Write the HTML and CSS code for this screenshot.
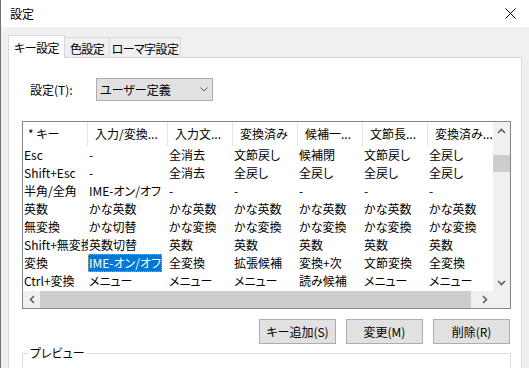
FILE: index.html
```html
<!DOCTYPE html>
<html lang="ja">
<head>
    <meta charset="UTF-8" />
    <title>設定</title>
    <link rel="stylesheet" href="styles.css">
</head>
<body>
<div class="window">
    <div class="titlebar">
        <span class="title">設定</span>
        <svg class="close" width="11" height="11" viewBox="0 0 11 11">
            <path d="M0.5 0.5L10.5 10.5M10.5 0.5L0.5 10.5" stroke="#000" stroke-width="1" fill="none" />
        </svg>
    </div>
    <div class="dialog">
        <div class="tabs">
            <div class="tab tab-key active">キー設定</div>
            <div class="tab tab-color">色設定</div>
            <div class="tab tab-roma">ローマ字設定</div>
        </div>
        <div class="panel">
            <div class="setting-row">
                <label class="setting-label">設定(T):</label>
                <div class="combo">
                    <span>ユーザー定義</span>
                    <svg width="8" height="5" viewBox="0 0 8 5">
                        <path d="M0.5 0.5L4 4L7.5 0.5" fill="none" stroke="#555" stroke-width="1" />
                    </svg>
                </div>
            </div>

            <div class="list">
                <div class="list-view">
                    <table>
                        <colgroup>
                            <col class="c-key">
                            <col class="c-wide">
                            <col class="c-norm">
                            <col class="c-norm">
                            <col class="c-norm">
                            <col class="c-norm">
                            <col class="c-last">
                        </colgroup>
                        <thead>
                        <tr>
                            <th class="first">* キー</th>
                            <th>入力/変換...</th>
                            <th>入力文...</th>
                            <th>変換済み</th>
                            <th>候補一...</th>
                            <th>文節長...</th>
                            <th>変換済み...</th>
                        </tr>
                        </thead>
                        <tbody>
                        <tr><td>Esc</td><td>-</td><td>全消去</td><td>文節戻し</td><td>候補閉</td><td>文節戻し</td><td>全戻し</td></tr>
                        <tr><td>Shift+Esc</td><td>-</td><td>全消去</td><td>全戻し</td><td>全戻し</td><td>全戻し</td><td>全戻し</td></tr>
                        <tr><td>半角/全角</td><td>IME-オン/オフ</td><td>-</td><td>-</td><td>-</td><td>-</td><td>-</td></tr>
                        <tr><td>英数</td><td>かな英数</td><td>かな英数</td><td>かな英数</td><td>かな英数</td><td>かな英数</td><td>かな英数</td></tr>
                        <tr><td>無変換</td><td>かな切替</td><td>かな変換</td><td>かな変換</td><td>かな変換</td><td>かな変換</td><td>かな変換</td></tr>
                        <tr><td>Shift+無変換</td><td>英数切替</td><td>英数</td><td>英数</td><td>英数</td><td>英数</td><td>英数</td></tr>
                        <tr><td>変換</td><td><span class="selected">IME-オン/オフ</span></td><td>全変換</td><td>拡張候補</td><td>変換+次</td><td>文節変換</td><td>全変換</td></tr>
                        <tr><td>Ctrl+変換</td><td>メニュー</td><td>メニュー</td><td>メニュー</td><td>読み候補</td><td>メニュー</td><td>メニュー</td></tr>
                        </tbody>
                    </table>
                </div>
                <div class="vscroll">
                    <div class="arrow">
                        <svg width="9" height="6" viewBox="0 0 9 6"><path d="M1 5L4.5 1.5L8 5" fill="none" stroke="#606060" stroke-width="1.6" /></svg>
                    </div>
                    <div class="vthumb"></div>
                    <div class="spacer"></div>
                    <div class="arrow">
                        <svg width="9" height="6" viewBox="0 0 9 6"><path d="M1 1L4.5 4.5L8 1" fill="none" stroke="#606060" stroke-width="1.6" /></svg>
                    </div>
                </div>
                <div class="hscroll">
                    <div class="arrow">
                        <svg width="6" height="9" viewBox="0 0 6 9"><path d="M5 1L1.5 4.5L5 8" fill="none" stroke="#606060" stroke-width="1.6" /></svg>
                    </div>
                    <div class="hthumb"></div>
                    <div class="spacer"></div>
                    <div class="arrow">
                        <svg width="6" height="9" viewBox="0 0 6 9"><path d="M1 1L4.5 4.5L1 8" fill="none" stroke="#606060" stroke-width="1.6" /></svg>
                    </div>
                </div>
                <div class="corner"></div>
            </div>

            <div class="buttons">
                <button type="button">キー追加(S)</button>
                <button type="button">変更(M)</button>
                <button type="button">削除(R)</button>
            </div>

            <fieldset class="preview">
                <legend>プレビュー</legend>
            </fieldset>
        </div>
    </div>
</div>
</body>
</html>
```

FILE: styles.css
```css
body {
    margin: 0;
    font-family: "Noto Sans CJK JP", sans-serif;
    font-size: 12px;
    font-feature-settings: "palt";
    color: #000;
}
.window {
    width: 529px;
    height: 368px;
    overflow: hidden;
    background: #f0f0f0;
    border-left: 1px solid #707070;
    box-sizing: border-box;
}
.titlebar {
    height: 27px;
    background: #fff;
    display: flex;
    align-items: center;
    justify-content: space-between;
    padding: 0 13px 0 9px;
    box-sizing: border-box;
}
.dialog {
    padding: 8px 7px 0 7px;
}
.tabs {
    display: flex;
    align-items: flex-end;
    height: 22px;
}
.tab {
    height: 20px;
    box-sizing: border-box;
    border: 1px solid #d9d9d9;
    border-bottom: none;
    background: #f0f0f0;
    display: flex;
    align-items: center;
    justify-content: center;
    white-space: nowrap;
    letter-spacing: -0.6px;
    padding-top: 2px;
    margin-left: -1px;
}
.tab.active {
    height: 23px;
    margin-bottom: -1px;
    margin-left: 0;
    padding-top: 0;
    background: #fff;
    position: relative;
    z-index: 1;
}
.tab-key { width: 57px; }
.tab-color { width: 46px; }
.tab-roma { width: 72px; }
.panel {
    background: #fff;
    border: 1px solid #d9d9d9;
    height: 400px;
}
.setting-row {
    display: flex;
    align-items: center;
    margin-top: 20px;
    padding-left: 21px;
}
.setting-label {
    width: 66px;
}
.combo {
    width: 117px;
    height: 23px;
    box-sizing: border-box;
    border: 1px solid #adadad;
    background: #e1e1e1;
    display: flex;
    align-items: center;
    justify-content: space-between;
    padding: 0 4px 0 3px;
}
.list {
    margin: 20px 0 0 13px;
    width: 489px;
    height: 188px;
    box-sizing: border-box;
    border: 1px solid #828790;
    display: grid;
    grid-template-columns: 470px 17px;
    grid-template-rows: 1fr 17px;
}
.list-view {
    overflow: hidden;
}
table {
    table-layout: fixed;
    border-collapse: separate;
    border-spacing: 0;
    width: 471px;
}
.c-key { width: 65px; }
.c-wide { width: 80px; }
.c-norm { width: 65px; }
.c-last { width: 66px; }
th, td {
    box-sizing: border-box;
    white-space: nowrap;
    overflow: hidden;
    text-align: left;
    font-weight: normal;
}
th {
    height: 24px;
    padding: 0 0 0 7px;
    border-right: 1px solid #e5e5e5;
    line-height: 16px;
}
th.first {
    padding-left: 5px;
}
td {
    height: 18px;
    padding: 0 0 0 1px;
    line-height: 18px;
}
.selected {
    display: inline-block;
    background: #0078d7;
    color: #fff;
    padding: 0 1px;
    margin-left: -1px;
    outline: 1px dotted #d9a04a;
    outline-offset: -1px;
}
.vscroll {
    background: #f0f0f0;
    display: flex;
    flex-direction: column;
}
.hscroll {
    background: #f0f0f0;
    display: flex;
}
.arrow {
    width: 17px;
    height: 17px;
    display: flex;
    align-items: center;
    justify-content: center;
    flex-shrink: 0;
}
.vthumb {
    height: 17px;
    margin-top: 16px;
    background: #cdcdcd;
}
.hthumb {
    width: 431px;
    background: #cdcdcd;
}
.spacer {
    flex: 1;
}
.corner {
    background: #f0f0f0;
}
.buttons {
    display: flex;
    justify-content: flex-end;
    gap: 10px;
    width: 488px;
    margin: 10px 0 0 13px;
}
button {
    width: 77px;
    height: 25px;
    padding: 0;
    border: 1px solid #adadad;
    background: #e1e1e1;
    font: inherit;
    color: #000;
}
.preview {
    margin: 1px 0 0 13px;
    width: 489px;
    height: 60px;
    box-sizing: border-box;
    border: 1px solid #dcdcdc;
    padding: 0 6px;
}
.preview legend {
    padding: 0 1px;
    line-height: 16px;
}
```
